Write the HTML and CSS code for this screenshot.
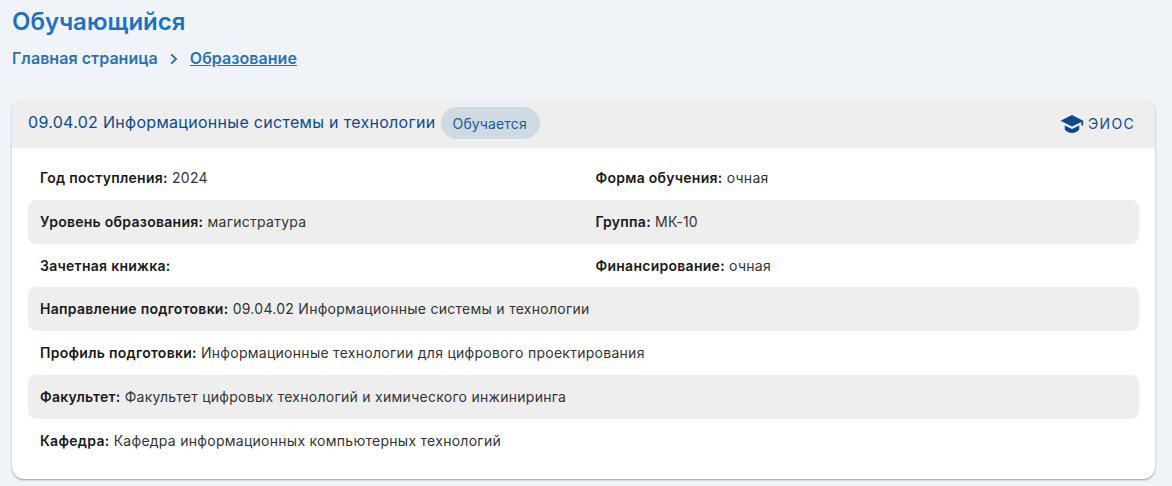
FILE: index.html
```html
<!DOCTYPE html>
<html lang="ru">
<head>
<meta charset="utf-8">
<title>Обучающийся</title>
<link rel="stylesheet" href="styles.css">
</head>
<body>
<main class="page">
  <h1 class="title">Обучающийся</h1>
  <nav class="crumbs">
    <a class="crumb" href="#">Главная страница</a>
    <svg class="chevron" viewBox="0 0 10 12" width="10" height="12"><path d="M2.200 1.400 7 6l-4.800 4.600" fill="none" stroke="#2a72b0" stroke-width="2"/></svg>
    <a class="crumb current" href="#">Образование</a>
  </nav>
  <section class="card">
    <header class="card-head">
      <span class="card-title">09.04.02 Информационные системы и технологии</span>
      <span class="badge">Обучается</span>
      <a class="eios" href="#">
        <svg class="cap" viewBox="0 0 24 20" width="24" height="20"><path fill="#0d4a8c" d="M12 1 .5 6.800 12 12.600l9.400-4.700v3.600h1.800V6.800z"/><path fill="#0d4a8c" d="M4.800 11.400v4.200C6.600 17.800 9 19 12 19s5.400-1.200 7.200-3.400v-4.200L12 15z"/></svg>
        <span>ЭИОС</span>
      </a>
    </header>
    <div class="card-body">
      <div class="row">
        <div class="cell"><b>Год поступления:</b> 2024</div>
        <div class="cell"><b>Форма обучения:</b> очная</div>
      </div>
      <div class="row shaded">
        <div class="cell"><b>Уровень образования:</b> магистратура</div>
        <div class="cell"><b>Группа:</b> МК-10</div>
      </div>
      <div class="row">
        <div class="cell"><b>Зачетная книжка:</b></div>
        <div class="cell"><b>Финансирование:</b> очная</div>
      </div>
      <div class="row shaded">
        <div class="cell"><b>Направление подготовки:</b> 09.04.02 Информационные системы и технологии</div>
      </div>
      <div class="row">
        <div class="cell"><b>Профиль подготовки:</b> Информационные технологии для цифрового проектирования</div>
      </div>
      <div class="row shaded">
        <div class="cell"><b>Факультет:</b> Факультет цифровых технологий и химического инжиниринга</div>
      </div>
      <div class="row">
        <div class="cell"><b>Кафедра:</b> Кафедра информационных компьютерных технологий</div>
      </div>
    </div>
  </section>
</main>
</body>
</html>
```
FILE: styles.css
```css
* { box-sizing: border-box; }
html, body { margin: 0; padding: 0; }
body {
  background: #f0f4f8;
  font-family: Inter, "Liberation Sans", sans-serif;
  color: #222;
  height: 486px;
  overflow: hidden;
}
.page { padding: 7px 17px 0 12px; }
.title {
  margin: 0;
  font-size: 24px;
  line-height: 29px;
  font-weight: 600;
  color: #1a73bc;
}
.crumbs {
  display: flex;
  align-items: center;
  height: 20px;
  margin-top: 12px;
  font-size: 16px;
  font-weight: 600;
  letter-spacing: 0.05px;
}
.crumb { color: #2a72b0; text-decoration: none; }
.crumb.current { text-decoration: underline; }
.chevron { margin: 2px 11px 0 11px; }
.card {
  margin-top: 31px;
  background: #fff;
  border-radius: 12px;
  overflow: hidden;
  box-shadow: 0 1px 2px rgba(30, 40, 60, 0.45);
  height: 380px;
}
.card-head {
  display: flex;
  align-items: center;
  height: 49px;
  padding: 0 20px 0 16px;
  background: #eeeeee;
  color: #0d4a8c;
}
.card-title {
  margin-bottom: 3px;
  font-size: 16px;
  line-height: 20px;
  letter-spacing: 0.3px;
}
.badge {
  margin: 0 0 2px 5px;
  padding: 0 13px 0 12px;
  height: 32px;
  line-height: 34px;
  border-radius: 16px;
  background: #d0dae3;
  font-size: 14px;
  letter-spacing: 0.15px;
  color: #1c5a96;
}
.eios {
  margin-left: auto;
  display: flex;
  align-items: center;
  gap: 4px;
  color: #0d4a8c;
  font-size: 14px;
  font-weight: 400;
  letter-spacing: 1.3px;
  text-decoration: none;
}
.card-body { padding: 8px 16px 0; }
.row {
  display: grid;
  grid-template-columns: 555.500px 1fr;
  align-items: center;
  height: 43.800px;
  padding: 0 12px 0.600px;
  font-size: 14px;
  color: #333;
}
.row.shaded { background: #eeeeee; border-radius: 8px; }
.cell { white-space: nowrap; letter-spacing: 0.27px; }
.cell b { font-weight: 600; color: #1a1a1a; }
.row:has(.cell:only-child) { grid-template-columns: 1fr; }
```
